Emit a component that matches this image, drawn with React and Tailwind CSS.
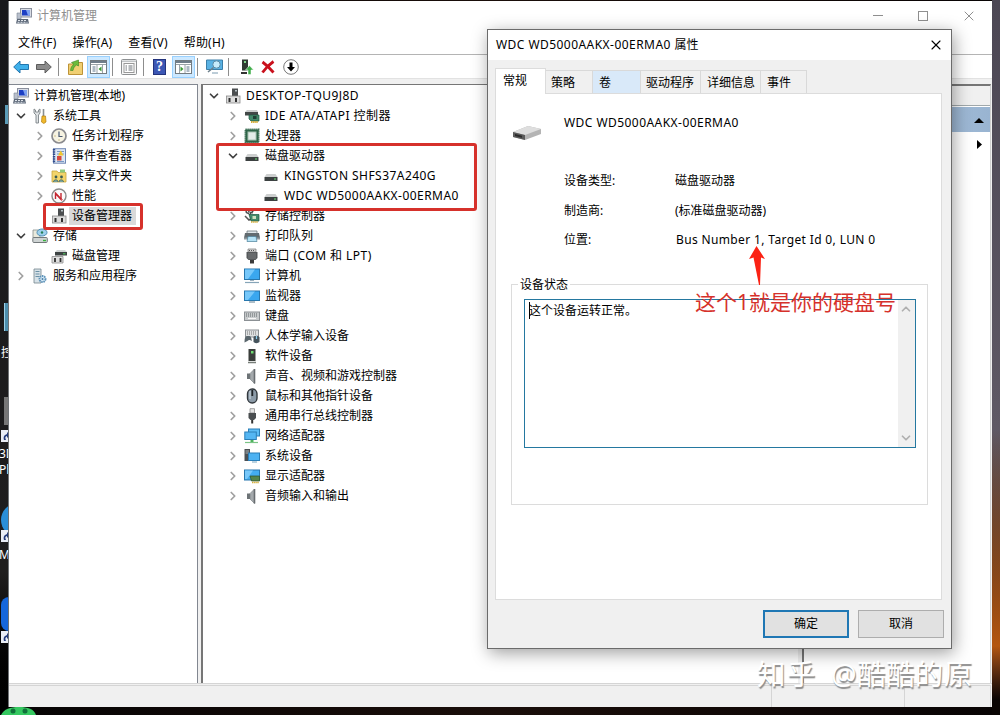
import { ChevronDown, ChevronRight, ChevronUp, X } from 'lucide-react'

// 16x16 drawings for the trees
const icons = {
  computer: (
    <>
      <rect x="4.5" y=".5" width="11" height="8.5" fill="#d9dde6" stroke="#8a8f9c" />
      <rect x="6" y="2" width="8" height="5.5" fill="#1d3fc4" />
      <path d="M10 2h4v5.5h-2z" fill="#7fa3f0" />
      <path d="M1 5h4v6H1z" fill="#b9c0cc" stroke="#7b8494" strokeWidth=".6" />
      <path d="M1 11h11l1 4.5H0z" fill="#5d6878" />
      <path d="M2 12.5h9M1.5 14.3h10" stroke="#dfe4ea" strokeDasharray="2 1" />
    </>
  ),
  tools: (
    <>
      <path d="M2 1v4l2 2v8h2.500V7L8 5V1L6.500 2v2H3.500V2z" fill="#dfe2e4" stroke="#7d8488" strokeWidth=".9" />
      <path d="M11.500 1v7" stroke="#8a8f92" strokeWidth="1.6" />
      <path d="M10 8h3.500l.5 6-2.200 1.500L9.500 14z" fill="#f0b92c" stroke="#b27d10" strokeWidth=".7" />
    </>
  ),
  clock: (
    <>
      <circle cx="8" cy="8" r="7" fill="#f7f3e2" stroke="#8b8b8f" strokeWidth="1.700" />
      <path d="M8 3.500V8.500h3.500" stroke="#4a5a74" strokeWidth="1.200" fill="none" />
      <path d="M3.500 8h1M8 12.500v-1" stroke="#a98f3a" />
    </>
  ),
  event: (
    <>
      <rect x="2.500" y=".7" width="12" height="14.500" fill="#dce7f4" stroke="#6f87b4" />
      <path d="M3 1v14" stroke="#304b8c" strokeWidth="2.400" strokeDasharray="1.500 .8" />
      <path d="M6 3.500h7M6 6h7M6 13.500h7" stroke="#7897c4" />
      <path d="M9.800 2.500l2.700 5H7z" fill="#f2c62d" />
      <rect x="6" y="8" width="4.500" height="4.500" fill="#d6483f" />
    </>
  ),
  share: (
    <>
      <path d="M1 3h5l1 1.500h8V14H1z" fill="#f3d46b" stroke="#c9a63c" strokeWidth=".8" />
      <path d="M9 1.500h5v3H9z" fill="#8fcb7c" />
      <circle cx="5" cy="9" r="1.400" fill="#3a5c55" />
      <circle cx="10.500" cy="9" r="1.400" fill="#3a5c55" />
      <path d="M2.500 14c0-3 4.500-3 4.500 0M8 14c0-3 4.500-3 4.500 0" fill="#7aa39c" stroke="#3a5c55" strokeWidth=".7" />
    </>
  ),
  perf: (
    <>
      <circle cx="8" cy="8" r="7" fill="#fbfbfb" stroke="#8b8b8b" strokeWidth="1.400" />
      <path d="M4.500 11V5.500l5.500 6V5" stroke="#c32530" strokeWidth="1.400" fill="none" />
      <path d="M4 3.800l8 8.500" stroke="#cf2d35" strokeWidth=".8" />
    </>
  ),
  device: (
    <>
      <rect x="7" y=".5" width="6" height="8" fill="#4b4e50" />
      <rect x="10" y="2" width="2" height="1.500" fill="#b7c2c6" />
      <rect x="1.500" y="8" width="13.500" height="7" fill="#dcdcdc" stroke="#8a8a8a" strokeWidth=".8" />
      <path d="M4.500 10v4M11 10v4" stroke="#303030" strokeWidth="2" />
    </>
  ),
  storage: (
    <>
      <path d="M1 2h7v8H1z" fill="#e9e9dc" stroke="#878d8b" strokeWidth=".8" />
      <ellipse cx="10" cy="4.500" rx="5" ry="3.500" fill="#9ed0ec" stroke="#4f8fb5" />
      <circle cx="10" cy="4.500" r="1.200" fill="#247f56" />
      <rect x=".8" y="9.500" width="14.500" height="5" rx="1" fill="#cfd4d4" stroke="#73797b" />
      <path d="M11 12.500h3" stroke="#35b23b" strokeWidth="1.400" />
    </>
  ),
  diskmgmt: (
    <>
      <path d="M4 4l2-2h8l2 2z" fill="#cfd3d3" />
      <rect x="4" y="4" width="12" height="3.500" fill="#3d4343" />
      <path d="M12 5.800h2.500" stroke="#54d060" />
      <path d="M1 8.500h11V15H1z" fill="#dedede" stroke="#8b8b8b" strokeWidth=".8" />
      <path d="M4 10v4M9.500 10v4" stroke="#303030" strokeWidth="1.800" />
    </>
  ),
  services: (
    <>
      <path d="M2 1h7v14H2z" fill="#d7e2e8" stroke="#75858e" strokeWidth=".8" />
      <path d="M3.500 3.500h4M3.500 6h4M3.500 8.500h4" stroke="#6b91a6" />
      <circle cx="10.500" cy="11" r="3" fill="#d8ebf7" stroke="#5b91b8" strokeWidth="1.900" strokeDasharray="1.500 .7" />
      <circle cx="10.500" cy="11" r="1" fill="#4a7fa6" />
    </>
  ),
  ide: (
    <>
      <path d="M1 4l2-2h10l1 2z" fill="#c9cccc" />
      <rect x="1" y="4" width="13" height="3.500" fill="#424848" />
      <path d="M5 7h10v6H7L5 11z" fill="#438a6b" stroke="#1c5740" strokeWidth=".7" />
      <rect x="9" y="8" width="3.500" height="3" fill="#1e3f34" />
      <path d="M7 14h7" stroke="#d5ad36" strokeWidth="2" strokeDasharray="1.500 .6" />
    </>
  ),
  cpu: (
    <>
      <rect x="1.500" y="1.500" width="13" height="13" fill="#2f6548" stroke="#2f6548" strokeWidth="2" strokeDasharray="1.200 .8" />
      <rect x="4" y="4" width="8" height="8" fill="#e4ece8" stroke="#a9c3b4" />
    </>
  ),
  disk: (
    <>
      <path d="M1.500 9l2-3h9l2 3z" fill="#cdcfcf" />
      <rect x="1.500" y="9" width="13" height="4" fill="#3c4141" />
      <path d="M11 11h2" stroke="#6de478" />
    </>
  ),
  controller: (
    <>
      <path d="M5.500 1.500C1 2 1 5 5 5.500M4 3.500l5 1.500M10 2L5 7" stroke="#464c4c" strokeWidth="1.300" fill="none" />
      <path d="M1 8l4 4 2-1" stroke="#555" strokeWidth="1.500" fill="none" />
      <path d="M5 6.500h10v6.500H7z" fill="#438a6b" stroke="#1c5740" strokeWidth=".7" />
      <rect x="8.500" y="8" width="3.500" height="3" fill="#cfe0c2" />
      <path d="M7 14h7" stroke="#d5ad36" strokeWidth="1.500" strokeDasharray="1.500 .6" />
    </>
  ),
  printer: (
    <>
      <path d="M3 3h10v2.500H3z" fill="#dfe6ea" stroke="#5c686e" strokeWidth=".7" />
      <path d="M1 5h14l1 5H0z" fill="#626b70" />
      <path d="M0 9.500h16v2H0z" fill="#8d979c" />
      <path d="M4 8.500h8l1 5H3z" fill="#b5e2f5" stroke="#4a7f99" strokeWidth=".7" />
    </>
  ),
  port: (
    <>
      <path d="M4 1h8v3H4z" fill="#d5d5d5" stroke="#777" strokeWidth=".7" />
      <path d="M5 2.500h6" stroke="#555" strokeDasharray="1 1" />
      <path d="M2.500 4h11v6l-2 2h-7l-2-2z" fill="#55585a" />
      <path d="M5 5v6M7 5v6M9 5v6M11 5v6" stroke="#898d8f" strokeWidth=".7" />
      <path d="M6 12h4v3.500H6z" fill="#3a3a3a" />
    </>
  ),
  pc: (
    <>
      <rect x=".5" y="1" width="15" height="10.500" fill="#3aa7ef" stroke="#2877ad" />
      <path d="M1 1.500h10L4 11H1z" fill="#77c8fa" />
      <path d="M6 12h4v1H6z" fill="#9fb2bf" />
      <path d="M1 14.500h14" stroke="#86a5b8" strokeWidth="1.200" />
    </>
  ),
  monitor: (
    <>
      <rect x=".5" y="3" width="15" height="9.500" fill="#3aa7ef" stroke="#2877ad" />
      <path d="M1 3.500h10L4 12H1z" fill="#77c8fa" />
      <path d="M5 14h6" stroke="#5f7f93" />
    </>
  ),
  keyboard: (
    <>
      <rect x=".5" y="4" width="15" height="8.500" fill="#c7cacc" stroke="#8b9094" />
      <path d="M2 6h12M2 8h12" stroke="#5f6669" strokeDasharray="1 1" />
      <path d="M4 10.500h8" stroke="#f6f6f6" strokeWidth="1.200" />
    </>
  ),
  hid: (
    <>
      <rect x="1.500" y="2" width="13" height="7" fill="#dfe1e2" stroke="#8b9094" />
      <path d="M3 4h10M3 6h10" stroke="#777" strokeDasharray="1 1" />
      <path d="M.5 14.500c0-5 1-7 3-6.500h2c1.500 0 2 3 2.500 5-2-1-3-1.500-4.500 0z" fill="#5a666c" />
      <path d="M9.500 14V9.500c0-2.500 5.500-2.500 6 0V14c-1.500 1.500-4.500 1.500-6 0z" fill="#46545c" />
      <path d="M12.500 8v3" stroke="#8fd0ef" strokeWidth="1.200" />
    </>
  ),
  software: (
    <>
      <rect x="4.500" y="1" width="7" height="12" fill="#3a3e3b" />
      <rect x="7" y="3" width="2.500" height="2.500" fill="#6fdc72" />
      <path d="M4 14.500h8" stroke="#777d78" strokeWidth="1.500" />
    </>
  ),
  speaker: (
    <>
      <path d="M3 5.500h3v5.500H3z" fill="#6d7376" />
      <path d="M6 5.500l4.500-4.500v14.500L6 11z" fill="#a4a9ac" stroke="#74797c" strokeWidth=".6" />
      <path d="M10.500 1v14.500" stroke="#686d70" strokeWidth="1.600" />
    </>
  ),
  mouse: (
    <>
      <rect x="3.500" y="1" width="9.500" height="14" rx="4.700" fill="#8c9ba8" stroke="#33393e" strokeWidth="1.400" />
      <path d="M6 3v8" stroke="#d6dfe6" />
      <path d="M8.300 2v6" stroke="#1f2326" strokeWidth="1.800" />
    </>
  ),
  usb: (
    <>
      <path d="M6 .7h4.500V5H6z" fill="#e4e4e4" stroke="#8b8b8b" strokeWidth=".8" />
      <path d="M4.500 5H12v5l-2 2H6.500l-2-2z" fill="#4a4e50" />
      <path d="M8.200 12v3.500" stroke="#333" strokeWidth="2" />
    </>
  ),
  network: (
    <>
      <rect x="4.500" y="1" width="11" height="7" fill="#5dbcf5" stroke="#2a7fb8" />
      <rect x=".8" y="4" width="11.500" height="7.500" fill="#54b6f3" stroke="#2a7fb8" />
      <path d="M8 12v2" stroke="#4bb35a" strokeWidth="3" />
      <path d="M1 14.500h13" stroke="#7cc487" strokeWidth="1.200" />
    </>
  ),
  system: (
    <>
      <rect x=".5" y="1" width="5.500" height="12" fill="#4b5054" />
      <path d="M1.500 3h3.500M1.500 5h3.500" stroke="#aab1b5" />
      <rect x="4.500" y="5" width="11" height="7.500" fill="#4db2f2" stroke="#2a7fb8" />
      <path d="M8 14h5" stroke="#78a6c1" />
    </>
  ),
  display: (
    <>
      <rect x=".5" y="2" width="15" height="10" fill="#43adf0" stroke="#2877ad" />
      <path d="M1 2.500h8L3 11H1z" fill="#77c8fa" />
      <path d="M6 8h9.500v5H7.500z" fill="#54854c" stroke="#2d5028" strokeWidth=".7" />
      <path d="M8 14.500h7" stroke="#d5ad36" strokeWidth="1.500" strokeDasharray="1.500 .6" />
    </>
  ),
}

function Icon({ name }) {
  return (
    <svg viewBox="0 0 16 16" className="size-4 shrink-0">
      {icons[name]}
    </svg>
  )
}

const consoleTree = [
  { level: 0, icon: 'computer', label: '计算机管理(本地)' },
  { level: 1, icon: 'tools', label: '系统工具', state: 'open' },
  { level: 2, icon: 'clock', label: '任务计划程序', state: 'closed' },
  { level: 2, icon: 'event', label: '事件查看器', state: 'closed' },
  { level: 2, icon: 'share', label: '共享文件夹', state: 'closed' },
  { level: 2, icon: 'perf', label: '性能', state: 'closed' },
  { level: 2, icon: 'device', label: '设备管理器', selected: true },
  { level: 1, icon: 'storage', label: '存储', state: 'open' },
  { level: 2, icon: 'diskmgmt', label: '磁盘管理' },
  { level: 1, icon: 'services', label: '服务和应用程序', state: 'closed' },
]

const deviceTree = [
  { level: 1, icon: 'device', label: 'DESKTOP-TQU9J8D', state: 'open', wide: true },
  { level: 2, icon: 'ide', label: 'IDE ATA/ATAPI 控制器', state: 'closed', wide: true },
  { level: 2, icon: 'cpu', label: '处理器', state: 'closed' },
  { level: 2, icon: 'disk', label: '磁盘驱动器', state: 'open' },
  { level: 3, icon: 'disk', label: 'KINGSTON SHFS37A240G', wide: true },
  { level: 3, icon: 'disk', label: 'WDC WD5000AAKX-00ERMA0', wide: true },
  { level: 2, icon: 'controller', label: '存储控制器', state: 'closed' },
  { level: 2, icon: 'printer', label: '打印队列', state: 'closed' },
  { level: 2, icon: 'port', label: '端口 (COM 和 LPT)', state: 'closed', wide: true },
  { level: 2, icon: 'pc', label: '计算机', state: 'closed' },
  { level: 2, icon: 'monitor', label: '监视器', state: 'closed' },
  { level: 2, icon: 'keyboard', label: '键盘', state: 'closed' },
  { level: 2, icon: 'hid', label: '人体学输入设备', state: 'closed' },
  { level: 2, icon: 'software', label: '软件设备', state: 'closed' },
  { level: 2, icon: 'speaker', label: '声音、视频和游戏控制器', state: 'closed' },
  { level: 2, icon: 'mouse', label: '鼠标和其他指针设备', state: 'closed' },
  { level: 2, icon: 'usb', label: '通用串行总线控制器', state: 'closed' },
  { level: 2, icon: 'network', label: '网络适配器', state: 'closed' },
  { level: 2, icon: 'system', label: '系统设备', state: 'closed' },
  { level: 2, icon: 'display', label: '显示适配器', state: 'closed' },
  { level: 2, icon: 'speaker', label: '音频输入和输出', state: 'closed' },
]

const indent = ['pl-px', 'pl-[1px]', 'pl-5', 'pl-[39px]']

function TreeRow({ node }) {
  return (
    <div className={`flex h-5 items-center whitespace-nowrap ${indent[node.level]}`}>
      {node.level > 0 && (
        <span className="flex w-[19px] shrink-0 items-center pl-px">
          {node.state === 'open' && <ChevronDown className="size-[14px] shrink-0 text-[#404040]" strokeWidth={3} />}
          {node.state === 'closed' && <ChevronRight className="size-[14px] shrink-0 text-[#a0a0a0]" strokeWidth={3} />}
        </span>
      )}
      <Icon name={node.icon} />
      <span className={`ml-[2px] pr-1 pl-[3px] leading-[18px] ${node.wide ? 'tracking-[0.45px]' : ''} ${node.selected ? 'bg-[#d9d9d9]' : ''}`}>
        {node.label}
      </span>
    </div>
  )
}

function Separator({ className }) {
  return <span className={`h-[18px] w-px bg-[#8d8d8d] ${className}`} />
}

function PaneIcon({ flip }) {
  return (
    <span className="flex h-[22px] w-[23px] items-center justify-center border border-[#99d1ff] bg-[#cce8ff]">
      <svg viewBox="0 0 17 14" className={`h-[14px] w-[17px] ${flip ? '-scale-x-100' : ''}`}>
        <rect x=".5" y=".5" width="16" height="13" fill="#fff" stroke="#737b80" />
        <path d="M1 2h15" stroke="#6f7d8a" strokeWidth="2" />
        <path d="M1 4.500h15M7 5v8M12.500 5v8" stroke="#9aa3a8" />
        <path d="M2.500 7h3M2.500 9h3M2.500 11h3" stroke="#5c748a" />
        <path d="M11.500 6.500v5L8.500 9z" fill="#3b9a35" />
      </svg>
    </span>
  )
}

function Toolbar() {
  return (
    <div className="flex h-[24px] shrink-0 items-center border-t border-[#b4b4b4] bg-white pl-[4px]">
      <svg viewBox="0 0 16 14" className="h-[14px] w-4">
        <path d="M.7 7L7 1v3.500h8.500v5H7V13z" fill="#3fb0ea" stroke="#2275ad" />
      </svg>
      <svg viewBox="0 0 16 14" className="ml-[7px] h-[14px] w-4">
        <path d="M15.300 7L9 1v3.500H.5v5H9V13z" fill="#8b8b8b" stroke="#5c5c5c" />
      </svg>
      <Separator className="ml-[6px]" />
      <svg viewBox="0 0 15 16" className="ml-[9px] h-4 w-[15px]">
        <path d="M.5 5h5l1.500-1.500h7.500v12H.5z" fill="#f0cf72" stroke="#bd9337" />
        <path d="M2.500 11.500C3 8 4 6.500 6 5.500L3.500 3.500 10.500 1v6L8.500 6C6.500 7 5.500 9 5 11.500z" fill="#6bbb3c" stroke="#3d8420" strokeWidth=".6" />
      </svg>
      <span className="ml-[4px]"><PaneIcon /></span>
      <Separator className="ml-[2px]" />
      <svg viewBox="0 0 16 16" className="ml-[8px] size-4">
        <rect x=".5" y=".5" width="15" height="15" rx="1" fill="#f7f7f7" stroke="#8d9092" />
        <path d="M1 2.200h14" stroke="#a9adb0" />
        <rect x="3" y="4.500" width="10" height="9" fill="#fff" stroke="#999" />
        <path d="M4.500 7h1.500M7.500 7h4M4.500 9h1.500M7.500 9h4M4.500 11h1.500M7.500 11h4" stroke="#6a7176" />
      </svg>
      <Separator className="ml-[6px]" />
      <span className="ml-[9px] flex h-4 w-[13px] items-center justify-center border border-[#23337c] bg-[#3c57b4] font-['Liberation_Serif'] text-[14px] font-bold leading-none text-white">?</span>
      <span className="ml-[6px]"><PaneIcon flip /></span>
      <Separator className="ml-[2px]" />
      <svg viewBox="0 0 17 15" className="ml-[8px] h-[15px] w-[17px]">
        <path d="M.5 1h16v9.500H.5z" fill="#59b2e4" stroke="#3c7fa8" />
        <circle cx="10.500" cy="5.500" r="3.700" fill="#c6ebfb" stroke="#5a8aa5" />
        <path d="M7.500 8.500L2 13" stroke="#6b7e8a" strokeWidth="1.500" />
        <path d="M6 14h6" stroke="#7b9bb0" />
      </svg>
      <Separator className="ml-[5px]" />
      <svg viewBox="0 0 14 16" className="ml-[11px] h-4 w-[14px]">
        <rect x="2" y=".5" width="6" height="11" fill="#2f3a32" />
        <rect x="4" y="2" width="2" height="2" fill="#7fd488" />
        <path d="M1 14h6" stroke="#333" strokeWidth="2" />
        <path d="M9.500 6.500L13.500 11H11v4.500H8V11H5.500z" fill="#3fae49" stroke="#fff" strokeWidth=".5" />
      </svg>
      <svg viewBox="0 0 14 14" className="ml-[7px] size-[14px]">
        <path d="M1.500 2Q7 6 12.500 12.500M12.500 1.500Q6 6 1.500 12.500" stroke="#c9101c" strokeWidth="2.800" fill="none" />
      </svg>
      <svg viewBox="0 0 16 16" className="ml-[8px] size-4">
        <circle cx="8" cy="8" r="7.300" fill="#fff" stroke="#777" />
        <path d="M6.500 3.500h3V8H12l-4 4.500L4 8h2.500z" fill="#000" />
      </svg>
    </div>
  )
}

function MainWindow() {
  return (
    <div className="flex h-[706px] w-[984px] flex-col border-l border-[#6f7376] bg-[#f0f0f0]">
      <div className="flex h-[29px] shrink-0 items-center bg-white pl-[7px] text-[#8f8f8f]">
        <Icon name="computer" />
        <span className="ml-[5px]">计算机管理</span>
        <div className="ml-auto flex items-center pr-[15px]">
          <div className="h-px w-[10px] bg-[#8f8f8f]" />
          <div className="ml-[35px] size-[10px] border border-[#8f8f8f]" />
          <X className="ml-[33px] size-[16px]" strokeWidth={1.500} />
        </div>
      </div>
      <div className="flex h-6 shrink-0 items-center gap-[16px] bg-white pt-px pl-[9px] tracking-[0.2px]">
        <span>文件(F)</span>
        <span>操作(A)</span>
        <span>查看(V)</span>
        <span>帮助(H)</span>
      </div>
      <Toolbar />
      <div className="h-[6px] shrink-0 border-t border-[#e2e2e2]" />
      <div className="flex h-[599px] shrink-0">
        <div className="w-[189px] border-t border-r border-[#828790] bg-white pt-px pl-[3px]">
          {consoleTree.map(node => <TreeRow key={node.label} node={node} />)}
        </div>
        <div className="ml-[3px] w-[597px] border-t border-l-2 border-[#767676] bg-white pt-px pl-[2px]">
          {deviceTree.map(node => <TreeRow key={node.label} node={node} />)}
        </div>
        <div className="ml-[4px] w-[189px] border-t-2 border-l-2 border-r border-t-[#767676] border-l-[#767676] border-r-[#d0d0d0] bg-white">
          <div className="h-5 border-b border-[#a0a8ab] bg-[#f0f0f0]" />
          <div className="mt-px flex h-[25px] items-center justify-end bg-linear-to-r from-[#b9d1ea] to-[#99b4d1] pt-px pr-[6px]">
            <svg viewBox="0 0 10 5" className="h-[5px] w-[10px]"><path d="M5 0l5 5H0z" /></svg>
          </div>
          <div className="flex h-6 items-center justify-end pr-[8px]">
            <svg viewBox="0 0 5 9" className="h-[9px] w-[5px]"><path d="M0 0v9l5-4.500z" /></svg>
          </div>
        </div>
      </div>
      <div className="flex grow border-t border-[#d5d5d5] pt-px">
        <div className="w-[763px] border-t border-r border-[#d5d5d5]" />
        <div className="w-[133px] border-t border-r border-[#d5d5d5]" />
        <div className="w-[86px] border-t border-r border-[#d5d5d5]" />
      </div>
    </div>
  )
}

const tabs = [
  { label: '策略', className: 'w-[47px] bg-[#f0f0f0] pl-[5px]' },
  { label: '卷', className: 'w-[48px] bg-[#d9e9f9] pl-[6px]' },
  { label: '驱动程序', className: 'w-[60px] bg-[#f0f0f0] pl-[5px]' },
  { label: '详细信息', className: 'w-[60px] bg-[#f0f0f0] pl-[6px]' },
  { label: '事件', className: 'w-[46px] bg-[#f0f0f0] pl-[6px]' },
]

function PropertiesDialog() {
  return (
    <div className="absolute top-[29px] left-[487px] flex h-[620px] w-[465px] flex-col border border-[#6b6b6b] bg-[#f0f0f0] shadow-[2px_4px_16px_rgba(0,0,0,0.38)]">
      <div className="flex h-[30px] shrink-0 items-center justify-between bg-white pr-[7px] pl-[8px]">
        <span className="tracking-[0.45px]">WDC WD5000AAKX-00ERMA0 <span className="tracking-normal">属性</span></span>
        <X className="size-4" strokeWidth={1.700} />
      </div>
      <div className="flex h-[33px] shrink-0 items-end pl-[7px]">
        <div className="relative -mb-px h-[26px] w-[51px] border border-b-0 border-[#dcdcdc] bg-white pt-[2px] pl-[7px] leading-[19px]">常规</div>
        {tabs.map(tab => (
          <div key={tab.label} className={`h-[23px] border-t border-r border-[#d9d9d9] leading-[23px] whitespace-nowrap ${tab.className}`}>
            {tab.label}
          </div>
        ))}
      </div>
      <div className="mx-[7px] h-[507px] w-[447px] shrink-0 border border-[#dcdcdc] bg-white">
        <div className="flex h-[58px] pl-[16px]">
          <svg viewBox="0 0 30 16" className="mt-[31px] h-4 w-[30px]">
            <path d="M1 7L16 1l13 3v5l-16 6L1 12z" fill="#b4b4b4" />
            <path d="M1 7L16 1l13 3-16 6z" fill="#dedede" />
            <path d="M1 7l12 3v5L1 12z" fill="#5a5a5a" />
            <path d="M3 9l7 1.700v2L3 11z" fill="#2b2b2b" />
          </svg>
          <span className="mt-[19px] ml-[22px] leading-5 tracking-[0.45px]">WDC WD5000AAKX-00ERMA0</span>
        </div>
        <div className="grid grid-cols-[111px_1fr] auto-rows-[29.500px] pt-[14px] pl-[68px] leading-[29px]">
          <span>设备类型:</span>
          <span>磁盘驱动器</span>
          <span>制造商:</span>
          <span>(标准磁盘驱动器)</span>
          <span>位置:</span>
          <span className="pl-px tracking-[0.36px]">Bus Number 1, Target Id 0, LUN 0</span>
        </div>
        <fieldset className="mt-[20px] ml-[15px] h-[230px] w-[417px] border border-[#dcdcdc] pl-[12px]">
          <legend className="-ml-[6px] px-[2px] leading-5">设备状态</legend>
          <div className="mt-[4px] flex h-[149px] w-[392px] justify-between border border-[#2478a0] bg-white">
            <div className="mt-[2px] ml-[4px] h-[17px] border-l border-black leading-[18px]"><span className="-ml-px">这个设备运转正常。</span></div>
            <div className="flex w-[17px] flex-col items-center justify-between bg-[#f0f0f0] py-[2px] pr-[2px] text-[#b0b0b0]">
              <ChevronUp className="size-[14px]" strokeWidth={3} />
              <ChevronDown className="size-[14px]" strokeWidth={3} />
            </div>
          </div>
        </fieldset>
      </div>
      <div className="mt-[10px] flex justify-end gap-[9px] pr-[7px]">
        <button className="h-[28px] w-[86px] border-2 border-[#1f77b4] bg-[#e1e1e1]">确定</button>
        <button className="h-[28px] w-[86px] border border-[#adadad] bg-[#e1e1e1]">取消</button>
      </div>
    </div>
  )
}

// red marks drawn over the windows
function Annotations() {
  return (
    <>
      <div className="absolute top-[203px] left-[43px] h-[27px] w-[100px] rounded-[3px] border-3 border-[#d6312b]" />
      <div className="absolute top-[143px] left-[216px] h-[68px] w-[261px] rounded-[3px] border-3 border-[#d6312b]" />
      <svg viewBox="0 0 16 40" className="absolute top-[246px] left-[749px] h-10 w-4">
        <path d="M7.500 0L16 13l-4-1.500L11 39h-1L4.500 11.500 0 13z" fill="#fb2214" />
      </svg>
      <div className="absolute top-[287px] left-[695px] text-[21px] leading-[30px] whitespace-nowrap text-[#d6312b]">
        这个1就是你的硬盘号
      </div>
    </>
  )
}

function Shortcut({ className }) {
  return (
    <svg viewBox="0 0 8 12" className={`absolute left-px h-3 w-2 ${className}`}>
      <rect width="8" height="12" fill="#e9edf5" />
      <path d="M3 10c-1-3 0-5 3-6V2l3 3-3 3V6C4 6.500 4 8 5 10z" fill="#223a7a" />
    </svg>
  )
}

function Desktop() {
  return (
    <>
      <div className="absolute inset-y-0 left-0 w-2 bg-linear-to-b from-[#17181b] via-[#1f1e1e] via-80% to-[#000] text-white">
        <div className="absolute top-[105px] left-[5px] h-[19px] w-1 bg-[#5b9cb8]" />
        <div className="absolute top-[303px] left-[4px] h-[28px] w-1 border-l border-[#9fd2e8] bg-[#4d8fae]" />
        <span className="absolute top-[344px] left-px">控</span>
        <div className="absolute top-[397px] left-[4px] h-[28px] w-1 bg-[#777]" />
        <Shortcut className="top-[430px]" />
        <span className="absolute top-[445px] -left-px">3D</span>
        <span className="absolute top-[461px] -left-px">Ph</span>
        <div className="absolute top-[503px] left-px size-[34px] rounded-full bg-[#2b8fd8]" />
        <Shortcut className="top-[530px]" />
        <span className="absolute top-[546px] -left-px">M</span>
        <div className="absolute top-[597px] left-px size-[34px] rounded-lg bg-[#1667dc]" />
        <Shortcut className="top-[631px]" />
      </div>
      <div className="absolute inset-y-0 right-0 w-2 bg-linear-to-b from-[#4c4754] from-0% via-[#5f5965] via-60% to-[#0a0504] to-98%" />
      <div className="absolute top-[430px] right-0 h-[270px] w-2 bg-linear-to-b from-[#5a5154]/0 via-[#b4560f] via-80% to-[#0a0504]" />
      <svg viewBox="0 0 36 8" className="absolute bottom-0 left-px h-2 w-9">
        <path d="M0 8C3 2 9 0 18 0s15 2 17 8z" fill="#35c860" />
        <circle cx="12" cy="4" r="2.500" fill="#11713a" />
        <circle cx="24" cy="4" r="2.500" fill="#11713a" />
      </svg>
    </>
  )
}

export default function App() {
  return (
    <div className="relative h-[715px] w-[1000px] overflow-hidden bg-linear-to-r from-[#060404] via-[#1a0e0a] to-[#080404] pt-px pl-2 font-['Noto_Sans','Noto_Sans_CJK_SC',sans-serif] text-[12px] leading-[18px] text-black">
      <Desktop />
      <div className="relative">
        <MainWindow />
      </div>
      <PropertiesDialog />
      <Annotations />
      <div className="absolute top-[654px] left-[757px] flex gap-[14px] text-[28.500px] leading-[40px] whitespace-nowrap text-white [text-shadow:1px_2px_1px_#8c8c8c]">
        <span className="tracking-[1.500px]">知乎</span>
        <span className="tracking-[0.400px]">@酷酷的原</span>
      </div>
    </div>
  )
}
